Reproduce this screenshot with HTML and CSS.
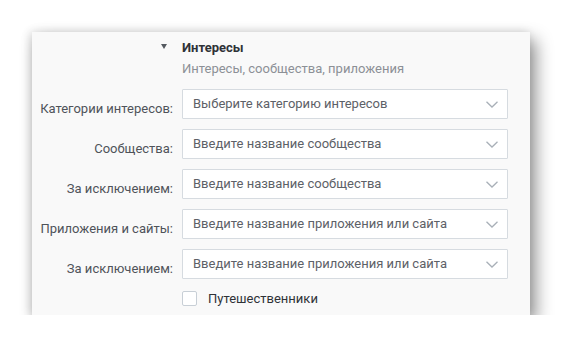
FILE: index.html
```html
<!DOCTYPE html>
<html lang="ru">
<head>
<meta charset="utf-8">
<link rel="stylesheet" href="styles.css">
</head>
<body>
<div class="panel">
  <div class="form">
    <div class="label toggle"><span class="tri"></span></div>
    <div class="title">Интересы</div>
    <div></div>
    <div class="subtitle">Интересы, сообщества, приложения</div>

    <div class="label">Категории интересов:</div>
    <div class="select"><span>Выберите категорию интересов</span><svg class="chev" width="12" height="7" viewBox="0 0 12 7"><path d="M0.5 0.8 L6 6 L11.5 0.8" fill="none" stroke="#a9b0b8" stroke-width="1.3"/></svg></div>

    <div class="label">Сообщества:</div>
    <div class="select"><span>Введите название сообщества</span><svg class="chev" width="12" height="7" viewBox="0 0 12 7"><path d="M0.5 0.8 L6 6 L11.5 0.8" fill="none" stroke="#a9b0b8" stroke-width="1.3"/></svg></div>

    <div class="label">За исключением:</div>
    <div class="select"><span>Введите название сообщества</span><svg class="chev" width="12" height="7" viewBox="0 0 12 7"><path d="M0.5 0.8 L6 6 L11.5 0.8" fill="none" stroke="#a9b0b8" stroke-width="1.3"/></svg></div>

    <div class="label">Приложения и сайты:</div>
    <div class="select"><span>Введите название приложения или сайта</span><svg class="chev" width="12" height="7" viewBox="0 0 12 7"><path d="M0.5 0.8 L6 6 L11.5 0.8" fill="none" stroke="#a9b0b8" stroke-width="1.3"/></svg></div>

    <div class="label">За исключением:</div>
    <div class="select"><span>Введите название приложения или сайта</span><svg class="chev" width="12" height="7" viewBox="0 0 12 7"><path d="M0.5 0.8 L6 6 L11.5 0.8" fill="none" stroke="#a9b0b8" stroke-width="1.3"/></svg></div>

    <div></div>
    <label class="check"><span class="box"></span><span>Путешественники</span></label>
  </div>
</div>
</body>
</html>
```
FILE: styles.css
```css
html, body {
  margin: 0;
  padding: 0;
  background: #ffffff;
}
body {
  font-family: Roboto, "Liberation Sans", Arial, sans-serif;
  font-size: 13px;
  color: #555a60;
}
.panel {
  margin: 32px 0 0 32px;
  width: 498px;
  height: 283px;
  box-sizing: border-box;
  background: #f9f9f9;
  box-shadow: 6px 8px 16px rgba(0,0,0,0.42), -2px 0 9px rgba(0,0,0,0.14);
  padding-top: 8px;
}
.form {
  display: grid;
  grid-template-columns: 141px 326px;
  column-gap: 9px;
  align-items: center;
}
.label {
  text-align: right;
  white-space: nowrap;
  line-height: 16px;
  color: #4f5359;
}
.toggle {
  height: 16px;
  display: flex;
  justify-content: flex-end;
  align-items: center;
  padding-right: 6px;
}
.tri {
  width: 0;
  height: 0;
  border-left: 3px solid transparent;
  border-right: 3px solid transparent;
  border-top: 5px solid #555a60;
  margin-top: -3px;
}
.title {
  font-weight: 700;
  color: #2f3237;
  line-height: 16px;
  height: 16px;
}
.subtitle {
  color: #8c9096;
  line-height: 16px;
  margin-top: 5px;
  margin-bottom: 12px;
}
.select {
  height: 30px;
  box-sizing: border-box;
  border: 1px solid #d6dbe0;
  background: #fff;
  display: flex;
  align-items: center;
  justify-content: space-between;
  padding: 0 9px 0 10px;
  color: #5d6167;
  margin-bottom: 10px;
  border-radius: 1px;
}
.select span {
  position: relative;
  top: -1px;
}
.chev {
  display: block;
}
.check {
  display: flex;
  align-items: center;
  height: 18px;
  color: #2f3237;
}
.box {
  width: 13px;
  height: 13px;
  border: 1px solid #c8cfd6;
  border-radius: 2px;
  background: #fff;
  margin-right: 11px;
}
```
